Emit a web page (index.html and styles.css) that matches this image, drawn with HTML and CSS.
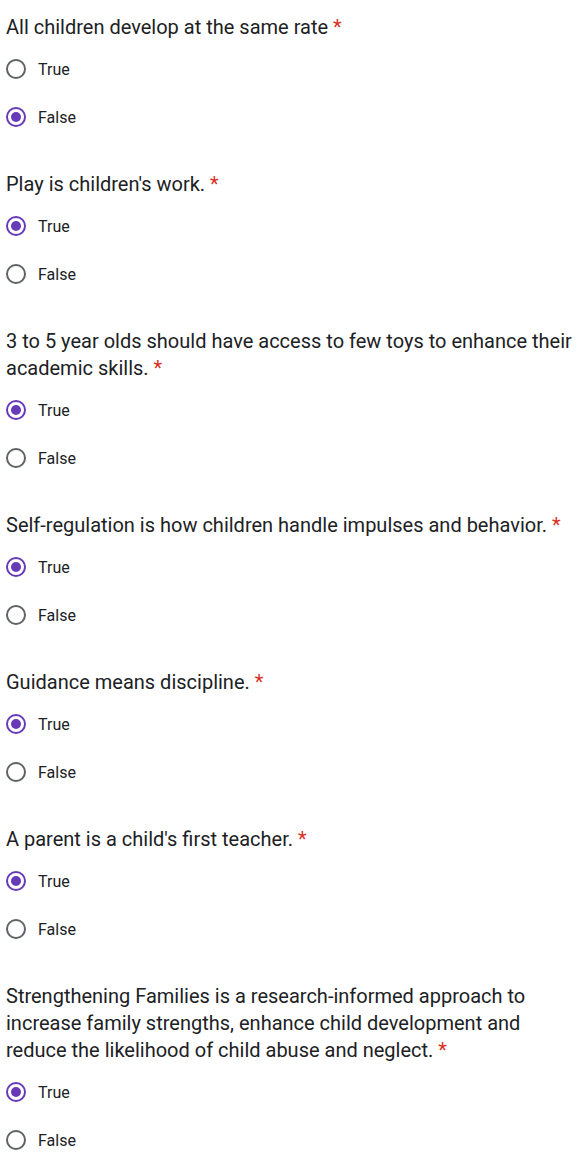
FILE: index.html
```html
<!DOCTYPE html>
<html>
<head>
<meta charset="utf-8">
<link rel="stylesheet" href="styles.css">
</head>
<body>
<main class="form">
  <section class="question">
    <div class="title">All children develop at the same rate <span class="req">*</span></div>
    <div class="options">
      <div class="option"><span class="radio"></span><span class="label">True</span></div>
      <div class="option"><span class="radio checked"></span><span class="label">False</span></div>
    </div>
  </section>
  <section class="question">
    <div class="title">Play is children's work. <span class="req">*</span></div>
    <div class="options">
      <div class="option"><span class="radio checked"></span><span class="label">True</span></div>
      <div class="option"><span class="radio"></span><span class="label">False</span></div>
    </div>
  </section>
  <section class="question">
    <div class="title">3 to 5 year olds should have access to few toys to enhance their academic skills. <span class="req">*</span></div>
    <div class="options">
      <div class="option"><span class="radio checked"></span><span class="label">True</span></div>
      <div class="option"><span class="radio"></span><span class="label">False</span></div>
    </div>
  </section>
  <section class="question">
    <div class="title">Self-regulation is how children handle impulses and behavior. <span class="req">*</span></div>
    <div class="options">
      <div class="option"><span class="radio checked"></span><span class="label">True</span></div>
      <div class="option"><span class="radio"></span><span class="label">False</span></div>
    </div>
  </section>
  <section class="question">
    <div class="title">Guidance means discipline. <span class="req">*</span></div>
    <div class="options">
      <div class="option"><span class="radio checked"></span><span class="label">True</span></div>
      <div class="option"><span class="radio"></span><span class="label">False</span></div>
    </div>
  </section>
  <section class="question">
    <div class="title">A parent is a child's first teacher. <span class="req">*</span></div>
    <div class="options">
      <div class="option"><span class="radio checked"></span><span class="label">True</span></div>
      <div class="option"><span class="radio"></span><span class="label">False</span></div>
    </div>
  </section>
  <section class="question">
    <div class="title">Strengthening Families is a research-informed approach to increase family strengths, enhance child development and reduce the likelihood of child abuse and neglect. <span class="req">*</span></div>
    <div class="options">
      <div class="option"><span class="radio checked"></span><span class="label">True</span></div>
      <div class="option"><span class="radio"></span><span class="label">False</span></div>
    </div>
  </section>
</main>
</body>
</html>
```
FILE: styles.css
```css
html, body {
  margin: 0;
  padding: 0;
  background: #ffffff;
}
body {
  font-family: Roboto, "Noto Sans", Arial, sans-serif;
  color: #202124;
}
.form {
  display: flex;
  flex-direction: column;
  gap: 30px;
  padding: 14px 6px 0 6px;
}
.question {
  display: flex;
  flex-direction: column;
  gap: 4px;
}
.title {
  font-size: 20px;
  line-height: 27px;
  color: #202124;
}
.req {
  color: #d93025;
}
.options {
  display: flex;
  flex-direction: column;
}
.option {
  height: 48px;
  display: flex;
  align-items: center;
  gap: 12px;
}
.radio {
  box-sizing: border-box;
  width: 20px;
  height: 20px;
  border-radius: 50%;
  border: 2px solid #5f6368;
  display: flex;
  align-items: center;
  justify-content: center;
  flex: none;
}
.radio.checked {
  border-color: #673ab7;
}
.radio.checked::after {
  content: "";
  width: 10px;
  height: 10px;
  border-radius: 50%;
  background: #673ab7;
}
.label {
  font-size: 16px;
  color: #202124;
}
```
